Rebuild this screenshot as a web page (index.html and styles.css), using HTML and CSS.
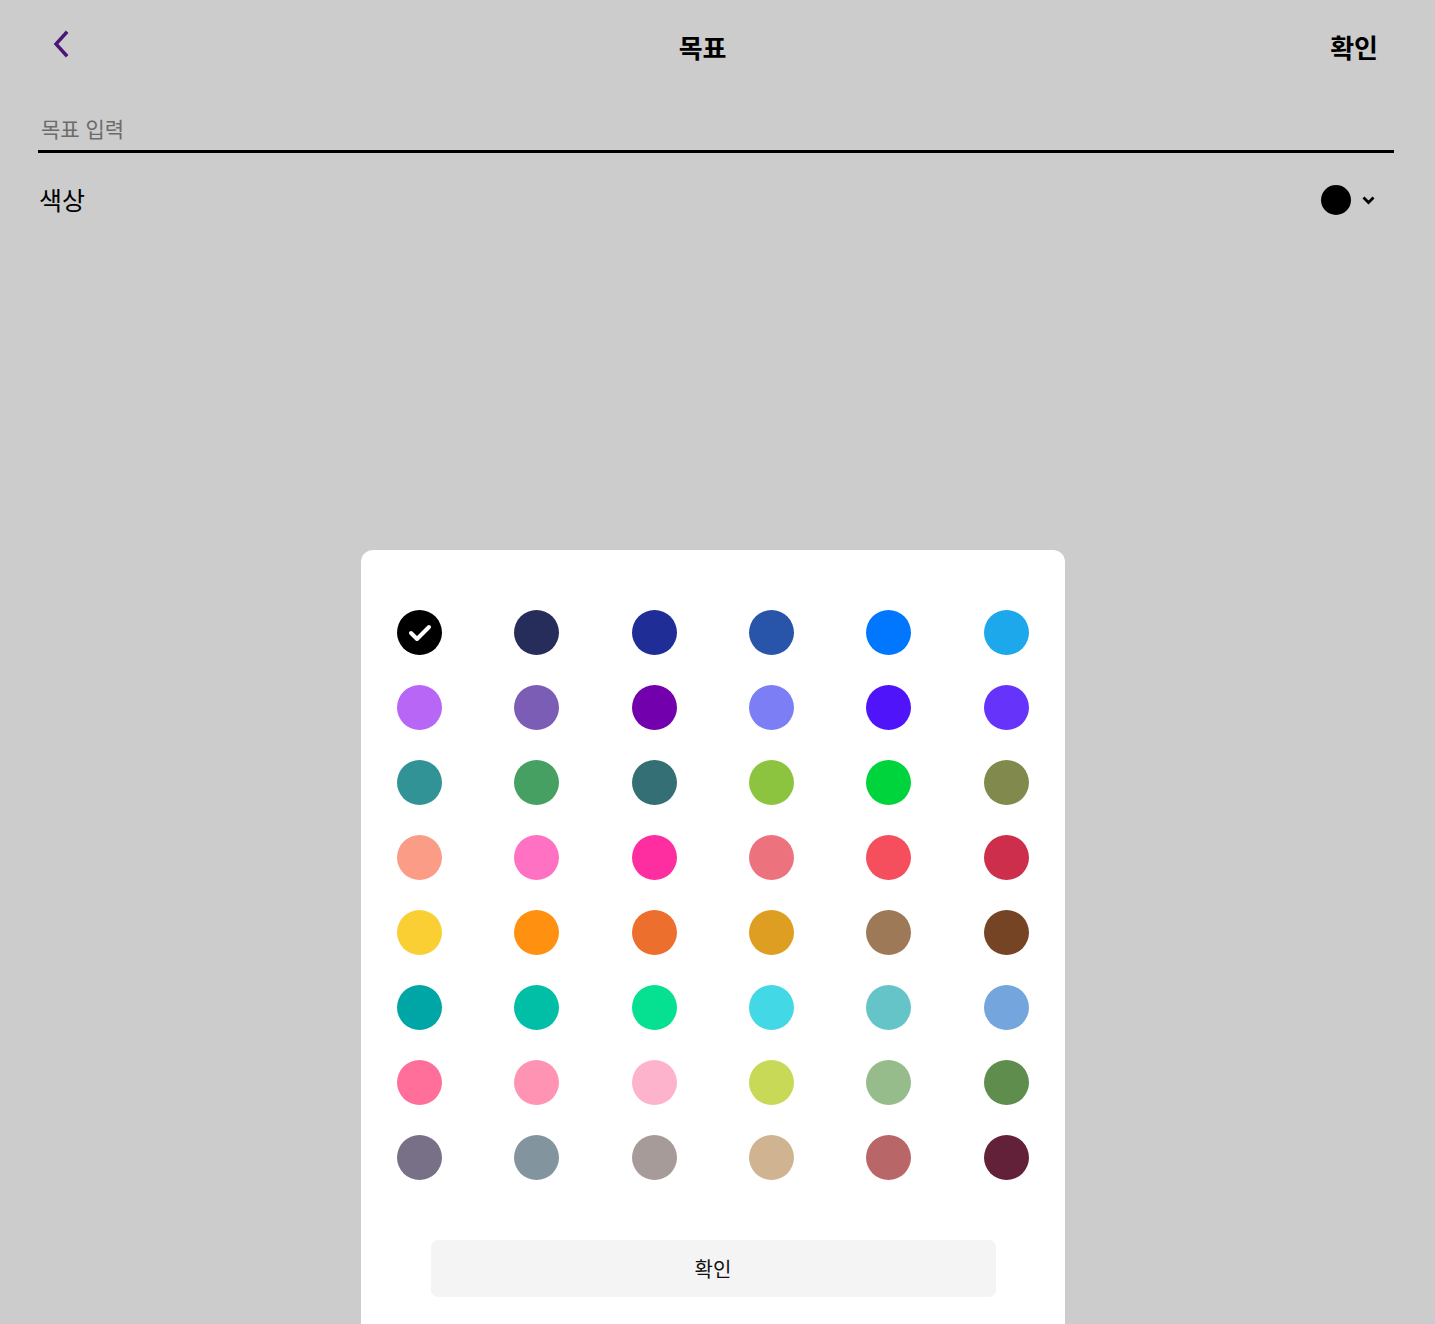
FILE: index.html
```html
<!DOCTYPE html>
<html lang="ko">
<head>
<meta charset="utf-8">
<title>목표</title>
<link rel="stylesheet" href="styles.css">
</head>
<body>
<div class="page">
  <header class="header">
    <button class="back" aria-label="back">
      <svg width="20" height="28" viewBox="0 0 20 28"><path d="M15 3 L5 14 L15 25" fill="none" stroke="#4b1777" stroke-width="3.4" stroke-linecap="square"/></svg>
    </button>
    <h1 class="title">목표</h1>
    <button class="ok">확인</button>
  </header>
  <div class="field">
    <input class="goal-input" type="text" placeholder="목표 입력">
  </div>
  <div class="color-row">
    <span class="color-label">색상</span>
    <div class="color-select">
      <span class="color-dot"></span>
      <svg width="13" height="9" viewBox="0 0 13 9"><path d="M1.5 1.5 L6.5 6.5 L11.5 1.5" fill="none" stroke="#000" stroke-width="2.8"/></svg>
    </div>
  </div>
</div>
<div class="sheet">
  <div class="palette">
    <span class="swatch selected" style="background:#000000"><svg width="26" height="20" viewBox="0 0 26 20"><path d="M4 10 L10 16 L22 4" fill="none" stroke="#fff" stroke-width="4" stroke-linecap="round" stroke-linejoin="round"/></svg></span>
    <span class="swatch" style="background:#262d5a"></span>
    <span class="swatch" style="background:#1f2d96"></span>
    <span class="swatch" style="background:#2855aa"></span>
    <span class="swatch" style="background:#0077fe"></span>
    <span class="swatch" style="background:#1ca8eb"></span>

    <span class="swatch" style="background:#b866f5"></span>
    <span class="swatch" style="background:#7b5db5"></span>
    <span class="swatch" style="background:#7300ad"></span>
    <span class="swatch" style="background:#7b7ef5"></span>
    <span class="swatch" style="background:#4f14fa"></span>
    <span class="swatch" style="background:#6633fa"></span>

    <span class="swatch" style="background:#329396"></span>
    <span class="swatch" style="background:#46a062"></span>
    <span class="swatch" style="background:#336f75"></span>
    <span class="swatch" style="background:#8dc43f"></span>
    <span class="swatch" style="background:#00d43c"></span>
    <span class="swatch" style="background:#818a4c"></span>

    <span class="swatch" style="background:#fb9d86"></span>
    <span class="swatch" style="background:#ff72c3"></span>
    <span class="swatch" style="background:#ff2ea0"></span>
    <span class="swatch" style="background:#ec737e"></span>
    <span class="swatch" style="background:#f54f5e"></span>
    <span class="swatch" style="background:#cd2e4c"></span>

    <span class="swatch" style="background:#f9cf33"></span>
    <span class="swatch" style="background:#ff9010"></span>
    <span class="swatch" style="background:#ec6f2e"></span>
    <span class="swatch" style="background:#dd9e21"></span>
    <span class="swatch" style="background:#9e7957"></span>
    <span class="swatch" style="background:#744425"></span>

    <span class="swatch" style="background:#00a6a6"></span>
    <span class="swatch" style="background:#00bfa6"></span>
    <span class="swatch" style="background:#06e091"></span>
    <span class="swatch" style="background:#42d8e6"></span>
    <span class="swatch" style="background:#64c4c8"></span>
    <span class="swatch" style="background:#74a5dc"></span>

    <span class="swatch" style="background:#ff6f9a"></span>
    <span class="swatch" style="background:#ff93b3"></span>
    <span class="swatch" style="background:#fdb3cb"></span>
    <span class="swatch" style="background:#c7d957"></span>
    <span class="swatch" style="background:#97bc8c"></span>
    <span class="swatch" style="background:#5e8d4d"></span>

    <span class="swatch" style="background:#787087"></span>
    <span class="swatch" style="background:#82959e"></span>
    <span class="swatch" style="background:#a69b98"></span>
    <span class="swatch" style="background:#d0b391"></span>
    <span class="swatch" style="background:#b96668"></span>
    <span class="swatch" style="background:#632039"></span>
  </div>
  <button class="sheet-ok">확인</button>
</div>
</body>
</html>
```
FILE: styles.css
```css
* { box-sizing: border-box; }
html, body {
  margin: 0;
  padding: 0;
  height: 100%;
  overflow: hidden;
}
body {
  background: #cccccc;
  font-family: "Noto Sans CJK KR", "Noto Sans", sans-serif;
  color: #000;
  position: relative;
}
button {
  font-family: inherit;
  border: 0;
  background: none;
  padding: 0;
  cursor: pointer;
}
.page {
  padding: 0 41px 0 38px;
}
.header {
  height: 94px;
  display: flex;
  align-items: center;
  justify-content: space-between;
  padding: 0 16px 0 13px;
}
.back {
  width: 20px;
  height: 28px;
  display: flex;
  margin-top: -6px;
}
.title {
  margin: 0 0 0 4px;
  font-size: 26px;
  font-weight: 700;
  line-height: 1;
}
.ok {
  font-size: 26px;
  font-weight: 700;
  color: #000;
  line-height: 1;
}
.field {
  border-bottom: 3px solid #000;
  height: 59px;
  display: flex;
  align-items: center;
}
.goal-input {
  width: 100%;
  border: 0;
  background: transparent;
  font-family: inherit;
  font-size: 21px;
  padding: 0 3px;
  margin-top: 11px;
  outline: none;
}
.goal-input::placeholder {
  color: #6b6b6b;
}
.color-row {
  height: 94px;
  display: flex;
  align-items: center;
  justify-content: space-between;
  padding: 0 19px 0 1px;
}
.color-label {
  font-size: 25px;
  margin-top: -2px;
}
.color-select {
  display: flex;
  align-items: center;
  gap: 11px;
}
.color-dot {
  width: 30px;
  height: 30px;
  border-radius: 50%;
  background: #000;
}
.sheet {
  position: absolute;
  left: 361px;
  top: 550px;
  width: 704px;
  bottom: -20px;
  background: #fff;
  border-radius: 12px 12px 0 0;
  padding-top: 60px;
  display: flex;
  flex-direction: column;
  align-items: center;
}
.palette {
  width: 100%;
  display: grid;
  grid-template-columns: repeat(6, 1fr);
  row-gap: 30px;
  justify-items: center;
}
.swatch {
  width: 45px;
  height: 45px;
  border-radius: 50%;
  display: flex;
  align-items: center;
  justify-content: center;
}
.sheet-ok {
  margin-top: 60px;
  width: 565px;
  height: 57px;
  background: #f4f4f4;
  border-radius: 7px;
  font-size: 20px;
  color: #111;
}
```
